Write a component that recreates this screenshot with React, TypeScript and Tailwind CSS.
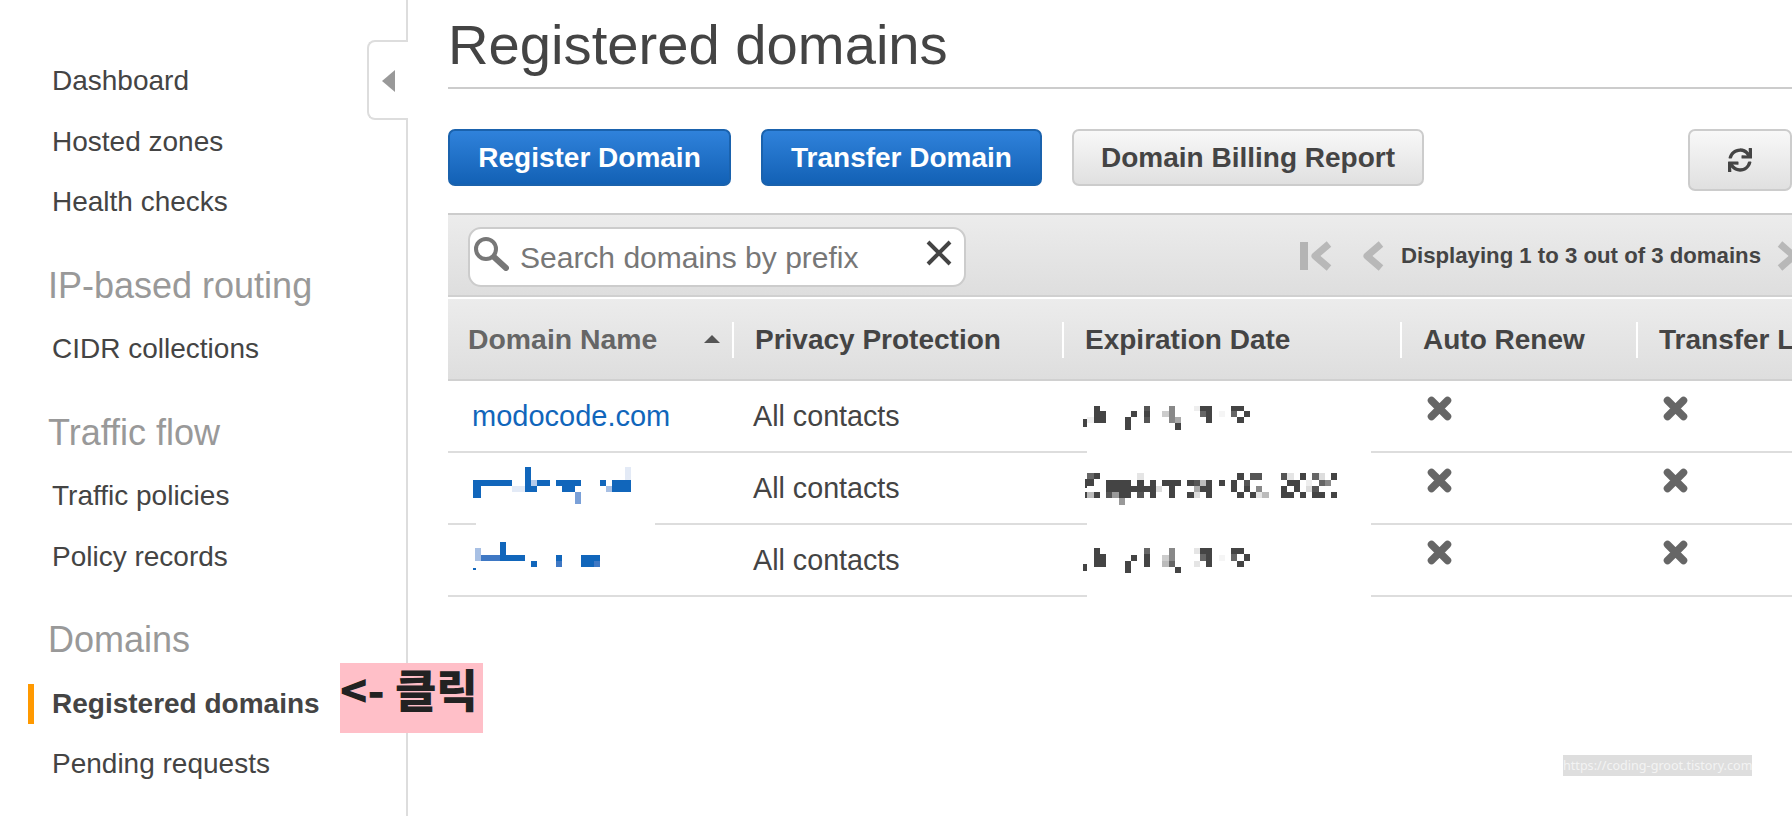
import { FaSync } from 'react-icons/fa';

type Cell = [number, number, number, number, string];

const sidebar = [
  { title: '', items: ['Dashboard', 'Hosted zones', 'Health checks'] },
  { title: 'IP-based routing', items: ['CIDR collections'] },
  { title: 'Traffic flow', items: ['Traffic policies', 'Policy records'] },
  { title: 'Domains', items: ['Registered domains', 'Pending requests'] },
];

const columns = ['Domain Name', 'Privacy Protection', 'Expiration Date', 'Auto Renew', 'Transfer Lock'];
const gridCols = 'grid grid-cols-[286px_330px_338px_236px_1fr]';

const B = '#1166bb';
const M = '#3f78c4';
const D = '#444444';

// mosaic blocks, in 3x pixels of the blurred-out area
const domainCells: Cell[] = [
  [108, 420, 645, 442, '#ffffff'],
  [100, 298, 122, 352, B],
  [122, 298, 216, 316, B],
  [216, 316, 255, 334, '#e3eaf6'],
  [255, 258, 273, 334, B],
  [273, 298, 291, 316, '#b4cbea'],
  [273, 316, 291, 334, B],
  [291, 298, 330, 316, B],
  [348, 298, 423, 316, B],
  [366, 316, 405, 334, B],
  [405, 334, 423, 370, '#7aa0d8'],
  [480, 298, 498, 316, B],
  [498, 316, 516, 334, '#a8c0e4'],
  [516, 298, 573, 334, B],
  [555, 258, 573, 298, '#e3eaf6'],
  [105, 502, 123, 540, '#a8c0e4'],
  [123, 522, 180, 540, M],
  [180, 483, 198, 540, B],
  [198, 522, 255, 540, B],
  [273, 540, 291, 558, B],
  [348, 522, 366, 540, B],
  [348, 540, 366, 558, M],
  [423, 522, 480, 540, B],
  [423, 540, 462, 558, B],
  [462, 540, 480, 558, M],
  [100, 560, 108, 566, B],
];

const dateCells: Cell[] = [
  [80, 204, 933, 654, '#ffffff'],
  // row 1
  [70, 115, 80, 137, D],
  [80, 108, 102, 126, '#f0f0f0'],
  [102, 75, 120, 90, D],
  [102, 90, 138, 126, D],
  [195, 108, 213, 146, D],
  [213, 90, 231, 108, D],
  [252, 75, 270, 90, '#555555'],
  [252, 90, 270, 108, D],
  [252, 108, 270, 126, '#555555'],
  [306, 90, 327, 108, '#cccccc'],
  [327, 75, 345, 126, '#888888'],
  [345, 108, 363, 126, '#aaaaaa'],
  [345, 126, 363, 146, D],
  [402, 75, 420, 90, '#eeeeee'],
  [420, 75, 456, 90, D],
  [420, 90, 438, 108, '#666666'],
  [438, 90, 456, 126, D],
  [477, 90, 495, 108, '#f5f5f5'],
  [513, 75, 552, 90, D],
  [513, 90, 531, 108, '#666666'],
  [552, 90, 570, 108, D],
  [531, 108, 552, 126, D],
  // row 2
  [75, 295, 80, 320, D],
  [82, 276, 102, 295, '#666666'],
  [102, 276, 120, 295, D],
  [80, 295, 102, 314, D],
  [75, 333, 80, 350, D],
  [80, 333, 102, 351, '#bbbbbb'],
  [102, 333, 120, 351, D],
  [138, 297, 213, 333, D],
  [138, 333, 156, 351, '#555555'],
  [156, 333, 177, 351, '#999999'],
  [177, 333, 213, 351, D],
  [177, 351, 195, 371, '#999999'],
  [231, 276, 252, 297, '#e5e5e5'],
  [231, 297, 252, 333, D],
  [213, 315, 288, 333, D],
  [231, 333, 252, 351, '#555555'],
  [270, 297, 288, 351, D],
  [288, 315, 306, 333, '#dddddd'],
  [306, 297, 363, 315, D],
  [327, 315, 345, 351, D],
  [381, 297, 402, 315, D],
  [402, 297, 420, 315, '#555555'],
  [420, 297, 438, 315, '#bbbbbb'],
  [438, 297, 456, 351, D],
  [402, 315, 420, 333, '#aaaaaa'],
  [420, 315, 438, 333, D],
  [381, 333, 402, 351, D],
  [402, 333, 420, 351, '#dddddd'],
  [477, 297, 495, 315, D],
  [531, 276, 552, 297, D],
  [513, 297, 531, 333, D],
  [552, 297, 570, 315, '#555555'],
  [570, 276, 606, 297, '#555555'],
  [552, 315, 570, 333, D],
  [588, 315, 606, 333, '#888888'],
  [531, 333, 552, 351, D],
  [570, 333, 588, 351, D],
  [588, 333, 606, 351, '#e5e5e5'],
  [606, 333, 627, 351, '#bbbbbb'],
  [663, 276, 681, 297, '#555555'],
  [681, 276, 702, 297, '#e5e5e5'],
  [720, 276, 738, 297, D],
  [681, 297, 720, 315, D],
  [663, 315, 681, 333, D],
  [702, 315, 720, 333, D],
  [663, 333, 702, 351, D],
  [720, 333, 738, 351, D],
  [756, 276, 777, 297, '#666666'],
  [777, 276, 795, 297, '#dddddd'],
  [813, 276, 831, 297, D],
  [738, 297, 756, 315, '#eeeeee'],
  [777, 297, 795, 315, '#666666'],
  [795, 297, 813, 315, '#888888'],
  [738, 315, 756, 333, '#dddddd'],
  [756, 315, 777, 333, '#555555'],
  [756, 333, 795, 351, D],
  [813, 333, 831, 351, D],
  // row 3
  [70, 548, 80, 570, D],
  [102, 502, 120, 520, D],
  [102, 520, 138, 557, D],
  [195, 540, 213, 575, D],
  [213, 522, 231, 540, D],
  [252, 502, 270, 520, '#666666'],
  [252, 520, 270, 557, D],
  [306, 522, 327, 540, '#cccccc'],
  [306, 540, 327, 557, '#bbbbbb'],
  [327, 502, 345, 540, '#888888'],
  [327, 540, 345, 557, '#666666'],
  [345, 557, 363, 575, D],
  [402, 502, 420, 520, '#e5e5e5'],
  [420, 502, 456, 520, D],
  [420, 520, 438, 540, '#666666'],
  [438, 520, 456, 557, D],
  [402, 540, 420, 557, '#e5e5e5'],
  [477, 522, 495, 540, '#f5f5f5'],
  [513, 502, 552, 520, D],
  [513, 520, 531, 540, '#666666'],
  [552, 520, 570, 540, D],
  [531, 540, 552, 557, D],
];

const Mosaic = ({ cells, w, className }: { cells: Cell[]; w: number; className: string }) => (
  <svg viewBox={`0 0 ${w * 3} 660`} width={w} height={220} shapeRendering="crispEdges" className={className}>
    {cells.map(([x1, y1, x2, y2, fill], i) => (
      <rect key={i} x={x1} y={y1} width={x2 - x1} height={y2 - y1} fill={fill} />
    ))}
  </svg>
);

const CrossIcon = () => (
  <svg width="25" height="25" viewBox="0 0 25 25" className="blur-[0.5px]">
    <path d="M4.5 4.5 L20.5 20.5 M20.5 4.5 L4.5 20.5" stroke="#666" strokeWidth="7.5" strokeLinecap="round" />
  </svg>
);

const PagerIcon = ({ bar }: { bar?: boolean }) => (
  <svg width={bar ? 32 : 22} height="30" viewBox={bar ? '0 0 32 30' : '0 0 22 30'} className="blur-[0.5px]">
    {bar && <rect x="0" y="1" width="8" height="28" fill="#b4b4b4" />}
    <path
      d={bar ? 'M29 3 L15 15 L29 27' : 'M19 3 L5 15 L19 27'}
      fill="none"
      stroke="#b8b8b8"
      strokeWidth="7"
      strokeLinejoin="round"
    />
  </svg>
);

const App = () => {
  return (
    <div className="relative flex w-[1792px] h-[816px] overflow-hidden bg-white text-[#444] font-['Liberation_Sans',Arial,sans-serif]">
      <aside className="relative w-[408px] shrink-0 border-r-2 border-[#ddd] pt-[51px] pl-[52px]">
        {sidebar.map((section) => (
          <div key={section.items[0]}>
            {section.title && (
              <div className="mt-[29px] mb-[9.5px] -ml-[4px] h-[48px] leading-[48px] text-[36px] text-[#999]">
                {section.title}
              </div>
            )}
            {section.items.map((item) => (
              <div
                key={item}
                className={`relative h-[60.5px] leading-[60.5px] text-[28px] whitespace-nowrap ${
                  item === 'Registered domains' ? 'font-bold' : ''
                }`}
              >
                {item === 'Registered domains' && (
                  <span className="absolute -left-[24px] top-[10px] w-[6px] h-[40px] bg-[#f90]" />
                )}
                {item}
              </div>
            ))}
          </div>
        ))}
        {/* collapse tab */}
        <div className="absolute left-[367px] top-[40px] w-[41px] h-[80px] flex items-center pl-[13px] bg-white border-2 border-r-0 border-[#ddd] rounded-l-[8px]">
          <div className="mt-[2px] w-0 h-0 border-y-[11px] border-y-transparent border-r-[13px] border-r-[#999]" />
        </div>
      </aside>

      <main className="flex-1 min-w-0 pl-[40px]">
        <h1 className="h-[89px] leading-[89px] border-b-2 border-[#ccc] text-[56.2px] font-normal whitespace-nowrap">
          Registered domains
        </h1>

        <div className="flex items-start h-[84px] mt-[40px]">
          <button className="h-[57px] w-[283px] rounded-[7px] border-2 border-[#1a62ad] bg-linear-to-b from-[#2f82db] to-[#1261b5] text-white text-[28px] font-bold">
            Register Domain
          </button>
          <button className="h-[57px] w-[281px] ml-[30px] rounded-[7px] border-2 border-[#1a62ad] bg-linear-to-b from-[#2f82db] to-[#1261b5] text-white text-[28px] font-bold">
            Transfer Domain
          </button>
          <button className="h-[57px] w-[352px] ml-[30px] rounded-[7px] border-2 border-[#ccc] bg-linear-to-b from-[#f8f8f8] to-[#e0e0e0] text-[28px] font-bold">
            Domain Billing Report
          </button>
          <button className="ml-auto h-[62px] w-[104px] flex items-center justify-center rounded-[7px] border-2 border-[#ccc] bg-linear-to-b from-[#f8f8f8] to-[#e0e0e0]">
            <FaSync size={24} />
          </button>
        </div>

        <div className="flex items-center h-[84px] border-y-2 border-t-[#ccc] border-b-[#d0d0d0] bg-linear-to-b from-[#ececec] to-[#dedede] pl-[20px]">
          <div className="flex items-center shrink-0 mt-[4px] w-[498px] h-[60px] rounded-[13px] border-2 border-[#ccc] bg-white pl-[3px]">
            <svg width="38" height="38" viewBox="0 0 38 38" className="shrink-0 blur-[0.5px] mr-[9px] -mt-[6px]">
              <circle cx="13" cy="14" r="10" fill="none" stroke="#777" strokeWidth="4" />
              <path d="M21 22 L33 33" stroke="#777" strokeWidth="6" strokeLinecap="round" />
            </svg>
            <span className="flex-1 mt-[1px] text-[30px] text-[#777] whitespace-nowrap">Search domains by prefix</span>
            <svg width="28" height="28" viewBox="0 0 28 28" className="shrink-0 mr-[11px] -mt-[8px]">
              <path d="M3 3 L25 25 M25 3 L3 25" stroke="#444" strokeWidth="4" />
            </svg>
          </div>
          <div className="flex items-center shrink-0 ml-[334px] mt-[2px] whitespace-nowrap">
            <PagerIcon bar />
            <div className="ml-[30px]">
              <PagerIcon />
            </div>
            <span className="ml-[17px] text-[22.2px] font-bold">Displaying 1 to 3 out of 3 domains</span>
            <div className="ml-[16px] scale-x-[-1]">
              <PagerIcon />
            </div>
          </div>
        </div>

        <div className={`${gridCols} h-[82px] pt-[2px] mt-[1.5px] border-b-2 border-[#d0d0d0] bg-linear-to-b from-[#ececec] to-[#dedede]`}>
          {columns.map((col, i) => (
            <div key={col} className="flex items-center">
              <span
                className={`font-bold whitespace-nowrap ${
                  i === 0 ? 'pl-[20px] text-[28.4px] text-[#666]' : 'pl-[21px] text-[28px]'
                }`}
              >
                {col}
              </span>
              {i === 0 && (
                <div className="ml-auto mr-[12px] -mt-[2px] w-0 h-0 border-x-[8px] border-x-transparent border-b-[8px] border-b-[#555]" />
              )}
              {i < 4 && <div className={`${i === 0 ? '' : 'ml-auto'} w-[2px] h-[36px] bg-white shrink-0`} />}
            </div>
          ))}
        </div>

        <div className="relative">
          {[0, 1, 2].map((row) => (
            <div key={row} className={`${gridCols} h-[72px] border-b-2 border-[#ddd]`}>
              <div className="pl-[24px] pt-[17px] leading-[36px] text-[29px] text-[#1166bb]">{row === 0 ? 'modocode.com' : ''}</div>
              <div className="pl-[19px] pt-[17px] leading-[36px] text-[28.7px]">All contacts</div>
              <div />
              <div className="pl-[25px] pt-[15px]">
                <CrossIcon />
              </div>
              <div className="pl-[25px] pt-[15px]">
                <CrossIcon />
              </div>
            </div>
          ))}
          <Mosaic cells={domainCells} w={230} className="absolute -left-[8px] top-0" />
          <Mosaic cells={dateCells} w={340} className="absolute left-[612px] top-0" />
        </div>
      </main>

      <div className="absolute left-[340px] top-[663px] w-[143px] h-[70px] bg-[#ffbfc8] leading-[51px] text-[45px] font-black text-[#222] whitespace-nowrap font-['Noto_Sans_CJK_KR','Liberation_Sans',sans-serif]">
        {'<- 클릭'}
      </div>

      <div className="absolute left-[1563px] top-[755px] w-[189px] h-[21px] bg-[#dedede] text-center leading-[21px] text-[12.6px] text-[#f3f3f3] whitespace-nowrap font-['Noto_Sans',sans-serif]">
        https://coding-groot.tistory.com
      </div>
    </div>
  );
};

export default App;
